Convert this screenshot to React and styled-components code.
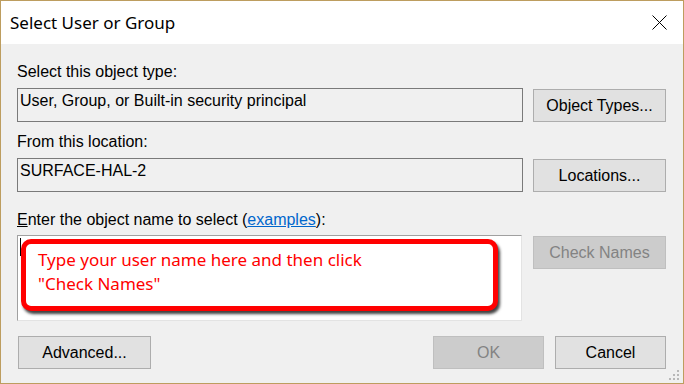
import React from "react";
import styled, { createGlobalStyle } from "styled-components";

const GlobalStyle = createGlobalStyle`
  html, body { margin: 0; padding: 0; background: #ffffff; }
  * { box-sizing: border-box; }
`;

const Window = styled.div`
  position: relative;
  width: 684px;
  height: 384px;
  border: 1px solid #bd9d5f;
  display: flex;
  flex-direction: column;
  overflow: hidden;
`;

const TitleBar = styled.div`
  height: 43px;
  flex: none;
  background: #ffffff;
  display: flex;
  align-items: center;
  justify-content: space-between;
  padding: 0 16px 0 9px;
`;

const Title = styled.span`
  font-family: "Noto Sans", "Open Sans", sans-serif;
  font-size: 17px;
  color: #000000;
`;

const CloseButton = styled.div`
  width: 15px;
  height: 15px;
  display: flex;
`;

const Body = styled.div`
  flex: 1;
  background: #f0f0f0;
  padding: 19px 17px 0 16px;
  display: flex;
  flex-direction: column;
  font-family: "Liberation Sans", Arial, sans-serif;
  font-size: 16px;
  color: #000000;
`;

const Label = styled.div`
  line-height: 18px;
  height: 18px;
  margin-bottom: ${(p) => p.$gap ?? 7}px;
  white-space: nowrap;
`;

const Underline = styled.span`
  text-decoration: underline;
`;

const Link = styled.a`
  color: #0066cc;
  text-decoration: underline;
`;

const FieldRow = styled.div`
  display: flex;
  align-items: flex-start;
  gap: 10px;
  margin-bottom: ${(p) => p.$after}px;
`;

const ReadField = styled.div`
  width: 506px;
  height: 34px;
  border: 1px solid #7a7a7a;
  padding: 3px 2px;
  line-height: 18px;
  white-space: nowrap;
`;

const EditField = styled.div`
  position: relative;
  width: 505px;
  height: 86px;
  background: #ffffff;
  border-style: solid;
  border-width: 1px;
  border-color: #a0a0a0 #e3e3e3 #e3e3e3 #a0a0a0;
`;

const Caret = styled.div`
  position: absolute;
  left: 2px;
  top: 2px;
  width: 1px;
  height: 18px;
  background: #000000;
`;

const Callout = styled.div`
  position: absolute;
  left: 3px;
  top: 3px;
  width: 477px;
  height: 72px;
  border: 5px solid #ff0000;
  border-radius: 10px;
  background: #ffffff;
  box-shadow: 2px 3px 3px rgba(0, 0, 0, 0.75);
  padding: 4px 12px;
  font-family: "Noto Sans", "Open Sans", sans-serif;
  font-size: 17px;
  line-height: 24px;
  color: #ff0000;
`;

const Button = styled.button`
  width: ${(p) => p.$w || 133}px;
  height: 33px;
  margin-top: ${(p) => p.$offset || 0}px;
  margin-left: ${(p) => p.$shift || 0}px;
  flex: none;
  padding: 0;
  background: ${(p) => (p.disabled ? "#cccccc" : "#e1e1e1")};
  border: 1px solid ${(p) => (p.disabled ? "#bfbfbf" : "#adadad")};
  border-radius: 0;
  font-family: "Liberation Sans", Arial, sans-serif;
  font-size: 16px;
  color: ${(p) => (p.disabled ? "#838383" : "#000000")};
  display: flex;
  align-items: center;
  justify-content: center;
`;

const BottomRow = styled.div`
  display: flex;
  align-items: center;
  justify-content: space-between;
  margin-top: 15px;
  padding-left: 1px;
`;

const ButtonGroup = styled.div`
  display: flex;
  gap: 11px;
`;

const Grip = styled.svg`
  position: absolute;
  right: 3px;
  bottom: 2px;
`;

export default function App() {
  return (
    <>
      <GlobalStyle />
      <Window>
        <TitleBar>
          <Title>Select User or Group</Title>
          <CloseButton>
            <svg width="15" height="15" viewBox="0 0 15 15">
              <path d="M0.5 0.5 L14.5 14.5 M14.5 0.5 L0.5 14.5" stroke="#000" strokeWidth="1" fill="none" />
            </svg>
          </CloseButton>
        </TitleBar>
        <Body>
          <Label>Select this object type:</Label>
          <FieldRow $after={11}>
            <ReadField>User, Group, or Built-in security principal</ReadField>
            <Button $offset={1}>Object Types...</Button>
          </FieldRow>
          <Label>From this location:</Label>
          <FieldRow $after={19}>
            <ReadField>SURFACE-HAL-2</ReadField>
            <Button $offset={1}>Locations...</Button>
          </FieldRow>
          <Label $gap={6}>
            <Underline>E</Underline>nter the object name to select (<Link>examples</Link>):
          </Label>
          <FieldRow $after={0}>
            <EditField>
              <Caret />
              <Callout>
                Type your user name here and then click
                <br />
                "Check Names"
              </Callout>
            </EditField>
            <Button $offset={1} $shift={1} disabled>Check Names</Button>
          </FieldRow>
          <BottomRow>
            <Button>Advanced...</Button>
            <ButtonGroup>
              <Button $w={111} disabled>OK</Button>
              <Button $w={111}>Cancel</Button>
            </ButtonGroup>
          </BottomRow>
        </Body>
        <Grip width="11" height="11" viewBox="0 0 11 11">
          <g fill="#b8b8b8">
            <rect x="8" y="0" width="2" height="2" />
            <rect x="4" y="4" width="2" height="2" />
            <rect x="8" y="4" width="2" height="2" />
            <rect x="0" y="8" width="2" height="2" />
            <rect x="4" y="8" width="2" height="2" />
            <rect x="8" y="8" width="2" height="2" />
          </g>
        </Grip>
      </Window>
    </>
  );
}
